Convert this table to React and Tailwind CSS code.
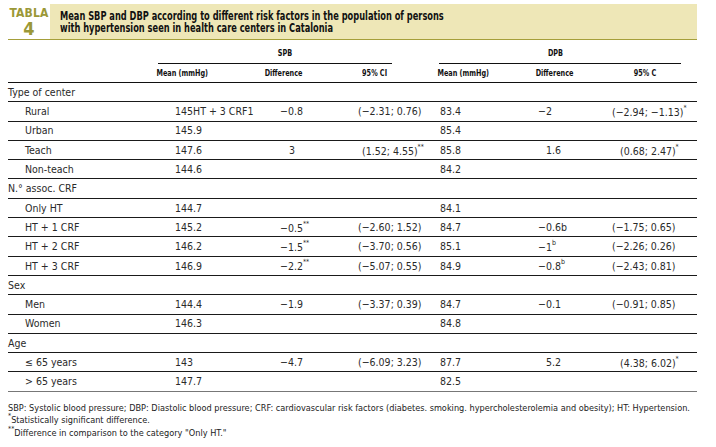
const COLS = 'grid grid-cols-[120px_108px_96px_86px_91px_91px_90px_7px]'

const sup = (t) => <sup className="text-[7px] relative -top-[1px] align-super leading-none">{t}</sup>

const ROWS = [
  { label: 'Type of center', group: true },
  { label: 'Rural', v: ['145HT + 3 CRF1', '−0.8', '(−2.31; 0.76)', '83.4', '−2', <>(−2.94; −1.13){sup('*')}</>] },
  { label: 'Urban', v: ['145.9', '', '', '85.4', '', ''] },
  { label: 'Teach', v: ['147.6', '3', <>(1.52; 4.55){sup('**')}</>, '85.8', '1.6', <>(0.68; 2.47){sup('*')}</>], pad: [0, 9, 4, 0, 8, 8] },
  { label: 'Non-teach', v: ['144.6', '', '', '84.2', '', ''] },
  { label: 'N.° assoc. CRF', group: true },
  { label: 'Only HT', v: ['144.7', '', '', '84.1', '', ''] },
  { label: 'HT + 1 CRF', v: ['145.2', <>−0.5{sup('**')}</>, '(−2.60; 1.52)', '84.7', '−0.6b', '(−1.75; 0.65)'] },
  { label: 'HT + 2 CRF', v: ['146.2', <>−1.5{sup('**')}</>, '(−3.70; 0.56)', '85.1', <>−1{sup('b')}</>, '(−2.26; 0.26)'] },
  { label: 'HT + 3 CRF', v: ['146.9', <>−2.2{sup('**')}</>, '(−5.07; 0.55)', '84.9', <>−0.8{sup('b')}</>, '(−2.43; 0.81)'] },
  { label: 'Sex', group: true },
  { label: 'Men', v: ['144.4', '−1.9', '(−3.37; 0.39)', '84.7', '−0.1', '(−0.91; 0.85)'] },
  { label: 'Women', v: ['146.3', '', '', '84.8', '', ''] },
  { label: 'Age', group: true },
  { label: '≤ 65 years', v: ['143', '−4.7', '(−6.09; 3.23)', '87.7', '5.2', <>(4.38; 6.02){sup('*')}</>], pad: [0, 0, 0, 0, 8, 8] },
  { label: '> 65 years', v: ['147.7', '', '', '82.5', '', ''] },
]

// left offset of the values inside each column
const BASE = [47, 44, 26, 22, 29, 12]

function Row({ row, last }) {
  return (
    <div className={`${COLS} h-[19.3px] items-center ${last ? 'border-b border-[#777]' : 'border-b border-[#1a1a1a]'}`}>
      <div className={`whitespace-nowrap ${row.group ? 'pl-0 col-span-8' : 'pl-[17px]'}`}>{row.label}</div>
      {!row.group && row.v.map((v, i) => (
        <div key={i} className="whitespace-nowrap" style={{ paddingLeft: BASE[i] + ((row.pad && row.pad[i]) || 0) }}>{v}</div>
      ))}
      {!row.group && <div />}
    </div>
  )
}

function Head({ children }) {
  return (
    <div className="text-center whitespace-nowrap">
      <span className="inline-block scale-x-[0.8]">{children}</span>
    </div>
  )
}

export default function App() {
  return (
    <div className="w-[716px] h-[447px] bg-white pl-[8px] pr-[19px] pt-[4px] text-[#2a2a2a] font-['Liberation_Sans_Narrow','DejaVu_Sans_Condensed',sans-serif] text-[10.5px] leading-none">
      {/* title band */}
      <div className="flex border-b-[1.5px] border-[#a59f3a] h-[36px]">
        <div className="w-[42px] flex flex-col items-center pt-[3px] text-[#9b9837] font-bold">
          <div className="text-[12px] tracking-[0.2px]">TABLA</div>
          <div className="text-[18px] mt-[1px]">4</div>
        </div>
        <div className="flex-1 bg-[#eee7b7] pl-[10px] pt-[6px] text-[12px] font-bold text-[#111] leading-[12px]">
          <div className="origin-left scale-x-[0.765] whitespace-nowrap">Mean SBP and DBP according to different risk factors in the population of persons</div>
          <div className="origin-left scale-x-[0.765] whitespace-nowrap">with hypertension seen in health care centers in Catalonia</div>
        </div>
      </div>

      {/* group headers */}
      <div className={`${COLS} mt-[3px] h-[21px] font-bold text-[9px] text-[#111]`}>
        <div />
        <div className="col-span-3 ml-[30px] mr-[26px] border-b-[1.5px] border-[#111] flex items-center justify-center pl-[20px]">
          <span className="inline-block scale-x-[0.8]">SPB</span>
        </div>
        <div className="col-span-3 ml-[21px] mr-[9px] border-b-[1.5px] border-[#111] flex items-center justify-center pr-[10px]">
          <span className="inline-block scale-x-[0.8]">DPB</span>
        </div>
      </div>
      <div className={`${COLS} h-[19px] items-center font-bold text-[9px] text-[#111] border-b-[1.5px] border-[#111]`}>
        <div />
        <Head>Mean (mmHg)</Head>
        <Head>Difference</Head>
        <Head>95% CI</Head>
        <Head>Mean (mmHg)</Head>
        <Head>Difference</Head>
        <Head>95% C</Head>
        <div />
      </div>

      {ROWS.map((r, i) => <Row key={i} row={r} last={i === ROWS.length - 1} />)}

      <div className="mt-[10px] text-[9.1px] leading-[12.5px] text-[#222] whitespace-nowrap">
        <div>SBP: Systolic blood pressure; DBP: Diastolic blood pressure; CRF: cardiovascular risk factors (diabetes. smoking. hypercholesterolemia and obesity); HT: Hypertension.</div>
        <div>{sup('*')}Statistically significant difference.</div>
        <div>{sup('**')}Difference in comparison to the category "Only HT."</div>
      </div>
    </div>
  )
}
